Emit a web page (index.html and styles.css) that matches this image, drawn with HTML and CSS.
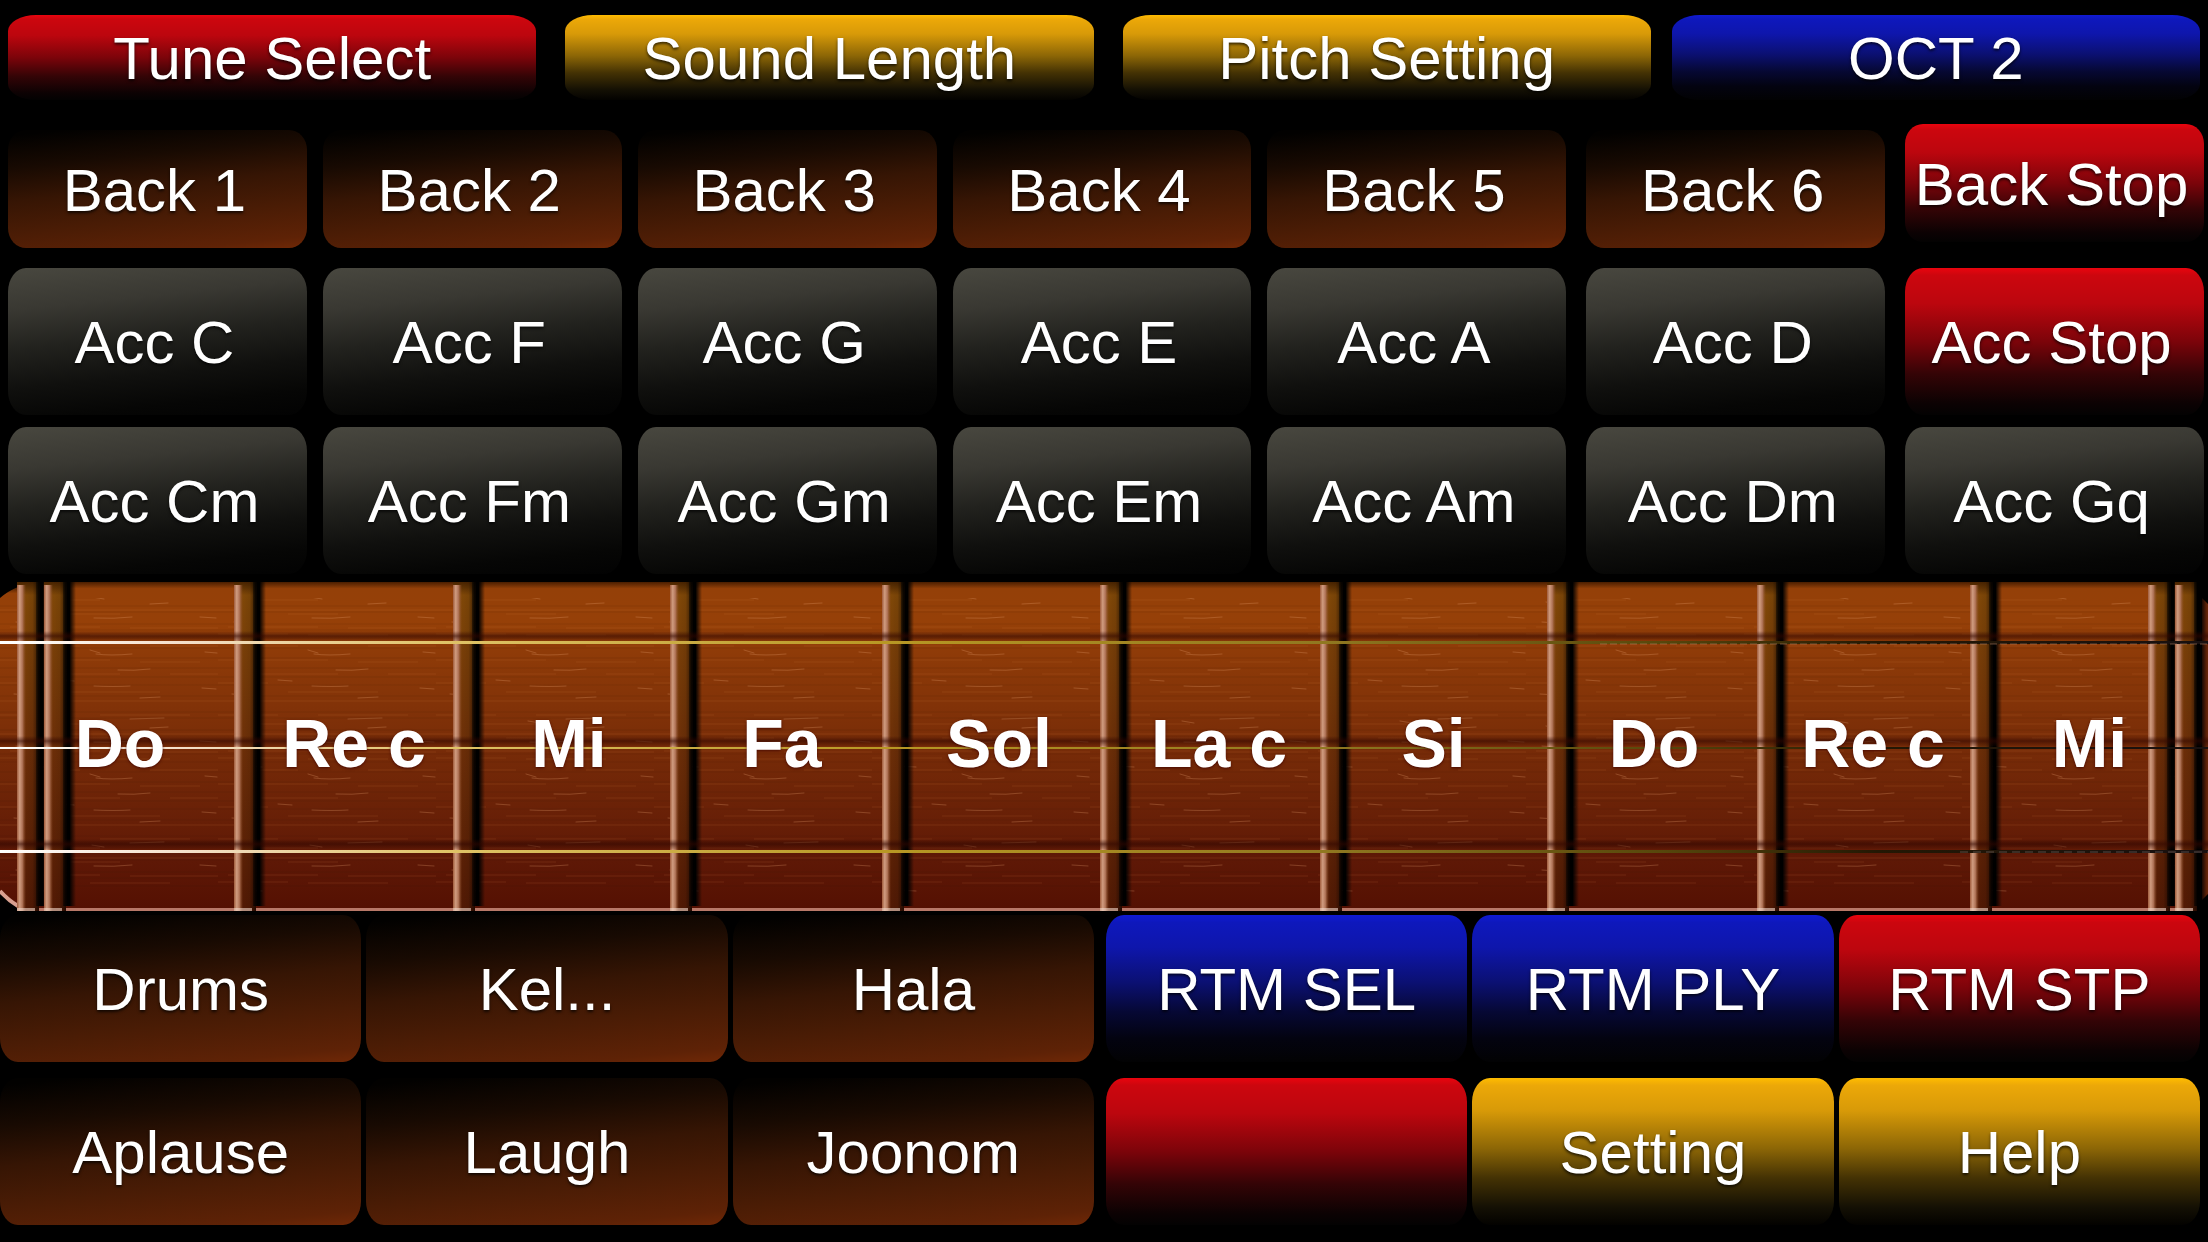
FILE: index.html
```html
<!DOCTYPE html>
<html lang="en">
<head>
    <meta charset="UTF-8">
    <meta name="viewport" content="width=device-width, initial-scale=1.0">
    <title>Strings</title>
    <link rel="stylesheet" href="styles.css">
</head>
<body>
    <main class="app">
        <!-- Top bar -->
        <div class="row row-top">
            <button class="key red">Tune Select</button>
            <button class="key gold">Sound Length</button>
            <button class="key gold">Pitch Setting</button>
            <button class="key blue">OCT 2</button>
        </div>

        <!-- Backing tracks -->
        <div class="row row-pads row-back">
            <button class="key brown">Back 1</button>
            <button class="key brown">Back 2</button>
            <button class="key brown">Back 3</button>
            <button class="key brown">Back 4</button>
            <button class="key brown">Back 5</button>
            <button class="key brown">Back 6</button>
            <button class="key red stop">Back Stop</button>
        </div>

        <!-- Accompaniment chords -->
        <div class="row row-pads row-major">
            <button class="key gray">Acc C</button>
            <button class="key gray">Acc F</button>
            <button class="key gray">Acc G</button>
            <button class="key gray">Acc E</button>
            <button class="key gray">Acc A</button>
            <button class="key gray">Acc D</button>
            <button class="key red">Acc Stop</button>
        </div>
        <div class="row row-pads row-minor">
            <button class="key gray">Acc Cm</button>
            <button class="key gray">Acc Fm</button>
            <button class="key gray">Acc Gm</button>
            <button class="key gray">Acc Em</button>
            <button class="key gray">Acc Am</button>
            <button class="key gray">Acc Dm</button>
            <button class="key gray">Acc Gq</button>
        </div>

        <!-- Fretboard -->
        <div class="fretboard">
            <svg class="board" viewBox="0 0 2208 329" preserveAspectRatio="none" aria-hidden="true">
                <defs>
                    <linearGradient id="wood" x1="0" y1="0" x2="0" y2="1">
                        <stop offset="0" stop-color="#4a1e00"/>
                        <stop offset=".02" stop-color="#944008"/>
                        <stop offset=".12" stop-color="#964008"/>
                        <stop offset=".5" stop-color="#782c08"/>
                        <stop offset=".85" stop-color="#5e1806"/>
                        <stop offset="1" stop-color="#541002"/>
                    </linearGradient>
                    <linearGradient id="bar" x1="0" y1="0" x2="0" y2="1">
                        <stop offset="0" stop-color="#4a2400"/>
                        <stop offset=".04" stop-color="#844a08"/>
                        <stop offset=".5" stop-color="#703008"/>
                        <stop offset="1" stop-color="#541a04"/>
                    </linearGradient>
                    <linearGradient id="barShade">
                        <stop offset="0" stop-color="#000" stop-opacity="0"/>
                        <stop offset=".6" stop-color="#000" stop-opacity=".1"/>
                        <stop offset="1" stop-color="#000" stop-opacity=".6"/>
                    </linearGradient>
                    <linearGradient id="shine">
                        <stop offset="0" stop-color="#a05c3c"/>
                        <stop offset=".3" stop-color="#d09c80"/>
                        <stop offset=".6" stop-color="#b07458"/>
                        <stop offset="1" stop-color="#8a4c28" stop-opacity="0"/>
                    </linearGradient>
                    <linearGradient id="slot">
                        <stop offset="0" stop-color="#000" stop-opacity=".4"/>
                        <stop offset=".3" stop-color="#000"/>
                        <stop offset=".5" stop-color="#000"/>
                        <stop offset="1" stop-color="#000" stop-opacity="0"/>
                    </linearGradient>
                    <linearGradient id="wire">
                        <stop offset="0" stop-color="#fff"/>
                        <stop offset=".08" stop-color="#f4e0cc"/>
                        <stop offset=".2" stop-color="#e0c468"/>
                        <stop offset=".4" stop-color="#b89824"/>
                        <stop offset=".6" stop-color="#907820"/>
                        <stop offset=".75" stop-color="#58480c"/>
                        <stop offset=".85" stop-color="#241804"/>
                        <stop offset="1" stop-color="#181010"/>
                    </linearGradient>
                    <linearGradient id="wireShade" x1="0" y1="0" x2="0" y2="1">
                        <stop offset="0" stop-color="#300600" stop-opacity="0"/>
                        <stop offset=".5" stop-color="#300600" stop-opacity=".6"/>
                        <stop offset="1" stop-color="#300600" stop-opacity=".1"/>
                    </linearGradient>
                    <pattern id="grain" width="218" height="124" patternUnits="userSpaceOnUse">
                        <g fill="none" stroke="#e8a070" stroke-linecap="round" stroke-opacity=".28">
                            <path d="M92 15l12 2M130 13l34-1M20 20l10 2M150 22l18-1M94 36q20 1 38 -1M200 35l16 1M16 40l14 1"/>
                            <path d="M90 68l10 3M96 72q14 2 36 0M205 70l12 1M24 60l20 1M118 88q16 1 32-1M22 84l10 1"/>
                            <path d="M94 104q20 1 36 0M202 106l14 1M140 116l20-1M14 112l16 1M60 98l14 1"/>
                        </g>
                        <g fill="none" stroke="#d07838" stroke-opacity=".16">
                            <path d="M0 9h60M100 9h90M30 18h70M0 28h218M70 32h50M10 45h90M130 46h88M0 52h70M90 53h80"/>
                            <path d="M20 64h60M150 64h68M0 78h110M140 80h60M40 92h80M170 92h48M0 101h50M70 110h90M0 119h218"/>
                        </g>
                        <g fill="none" stroke="#2c0800" stroke-opacity=".12">
                            <path d="M0 6h218M0 12h218M0 24h218M0 30h218M0 42h218M0 48h218M0 56h218M0 66h218M0 76h218M0 86h218M0 95h218M0 103h218M0 114h218"/>
                        </g>
                    </pattern>
                    <!-- one fret: highlight, bar and the dark slot behind it -->
                    <g id="fret">
                        <rect width="22" height="329" fill="url(#bar)"/>
                        <rect x="6" width="16" height="329" fill="url(#barShade)"/>
                        <rect width="9" y="3" height="326" fill="url(#shine)"/>
                        <rect x="19" width="13" height="324" fill="url(#slot)"/>
                        <rect y="326" width="18" height="3" fill="#f4d8cc" fill-opacity=".6"/>
                    </g>
                </defs>

                <!-- rounded ends -->
                <path d="M0 16Q8 9 18 5V324Q8 318 0 309Z" fill="url(#wood)"/>
                <path d="M0 309Q8 318 18 324" fill="none" stroke="#d8a090" stroke-width="4"/>
                <path d="M2202 16L2208 22V312L2202 318Z" fill="#642408"/>

                <rect x="17" width="2178" height="329" fill="url(#wood)"/>
                <rect y="16" width="2195" height="294" fill="url(#grain)"/>
                <rect x="17" y="326" width="2178" height="3" fill="#b87868"/>

                <use href="#fret" x="17"/>
                <use href="#fret" x="44"/>
                <use href="#fret" x="234"/>
                <use href="#fret" x="453"/>
                <use href="#fret" x="670"/>
                <use href="#fret" x="882"/>
                <use href="#fret" x="1100"/>
                <use href="#fret" x="1320"/>
                <use href="#fret" x="1547"/>
                <use href="#fret" x="1757"/>
                <use href="#fret" x="1970"/>
                <use href="#fret" x="2148"/>
                <use href="#fret" x="2175"/>

                <!-- strings -->
                <rect y="49" width="2208" height="10" fill="url(#wireShade)"/>
                <rect y="59" width="2208" height="3" fill="url(#wire)"/>
                <path d="M1600 62H2208" stroke="#c08c70" stroke-opacity=".5" stroke-dasharray="7 3"/>
                <rect y="154" width="2208" height="10" fill="url(#wireShade)"/>
                <rect y="165" width="2208" height="2" fill="url(#wire)"/>
                <rect y="257" width="2208" height="10" fill="url(#wireShade)"/>
                <rect y="268" width="2208" height="3" fill="url(#wire)"/>
                <path d="M1960 270H2208" stroke="#80706c" stroke-opacity=".6" stroke-dasharray="8 5"/>
            </svg>
            <div class="notes">
                <button class="note">Do</button>
                <button class="note">Re c</button>
                <button class="note">Mi</button>
                <button class="note">Fa</button>
                <button class="note">Sol</button>
                <button class="note">La c</button>
                <button class="note">Si</button>
                <button class="note">Do</button>
                <button class="note">Re c</button>
                <button class="note">Mi</button>
            </div>
        </div>

        <!-- Effects and rhythm -->
        <div class="bottom">
            <div class="panel">
                <button class="key brown">Drums</button>
                <button class="key brown">Kel...</button>
                <button class="key brown">Hala</button>
                <button class="key brown">Aplause</button>
                <button class="key brown">Laugh</button>
                <button class="key brown">Joonom</button>
            </div>
            <div class="panel">
                <button class="key blue">RTM SEL</button>
                <button class="key blue">RTM PLY</button>
                <button class="key red">RTM STP</button>
                <button class="key red"></button>
                <button class="key gold">Setting</button>
                <button class="key gold">Help</button>
            </div>
        </div>
    </main>
</body>
</html>
```

FILE: styles.css
```css
:root {
    --red: linear-gradient(#ea040e 0, #cc060e 5%, #bc060e 24%, #7c040a 50%, #340406 72%, #0c0203 92%, #030202 100%);
    --gold: linear-gradient(#ffbc00 0, #eca808 5%, #d89a08 22%, #8c6606 48%, #443204 68%, #141004 88%, #030200 100%);
    --blue: linear-gradient(#101ad4 0, #0e18bc 5%, #0e16ac 22%, #0b1072 46%, #060834 66%, #030310 84%, #020203 100%);
    --brown: linear-gradient(174deg, #020100 4%, #180a02 26%, #361504 48%, #4a1c05 70%, #5e2206 92%, #702806 100%);
    --gray: linear-gradient(174deg, #47463e 2%, #393832 24%, #22221e 46%, #10100e 68%, #060605 86%, #020202 100%);
}

* {
    margin: 0;
    padding: 0;
    box-sizing: border-box;
}

body {
    background-color: #000;
    color: #fff;
    font-family: "Liberation Sans", Arial, Helvetica, sans-serif;
    min-height: 100vh;
    overflow-x: hidden;
}

.app {
    padding-top: 15px;
}

button {
    border: none;
    background: none;
    color: inherit;
    font-family: inherit;
    white-space: nowrap;
    cursor: pointer;
}

/* Keys */
.key {
    flex: 1 1 0;
    min-width: 0;
    height: 147px;
    padding-top: 2px;
    border-radius: 18px / 24px;
    font-size: 60px;
    line-height: 68px;
    text-shadow: 0 2px 3px rgba(0, 0, 0, 0.7);
}

.key:active {
    filter: brightness(1.3);
}

.red { background: var(--red); }
.gold { background: var(--gold); }
.blue { background: var(--blue); }
.brown { background: var(--brown); }
.gray { background: var(--gray); }

.row {
    display: flex;
}

.row-top {
    gap: 21px;
    padding: 0 8px;
    margin-bottom: 24px;
}

.row-top .key {
    height: 85px;
    border-radius: 28px / 16px;
}

.row-top .gold {
    margin-left: 8px;
}

.row-pads {
    gap: 16px;
    padding: 0 4px 0 8px;
}

.row-pads .key {
    padding-right: 6px;
}

.row-pads .key:nth-child(n+6) {
    margin-left: 4px;
}

.row-back {
    align-items: flex-end;
    height: 124px;
    margin-bottom: 20px;
}

.row-back .key {
    height: 118px;
    padding-top: 4px;
    border-radius: 18px / 20px;
}

.row-back .stop {
    align-self: flex-start;
}

.row-major {
    margin-bottom: 12px;
}

.row-minor {
    margin-bottom: 8px;
}

/* Fretboard */
.fretboard {
    display: grid;
    height: 329px;
    margin-bottom: 4px;
}

.board,
.notes {
    grid-area: 1 / 1;
    width: 100%;
    height: 329px;
}

.notes {
    z-index: 1;
    display: grid;
    grid-template-columns: 240fr 228fr 202fr 224fr 210fr 230fr 199fr 242fr 196fr 237fr;
}

.note {
    min-width: 0;
    padding-bottom: 8px;
    font-size: 68px;
    font-weight: bold;
    text-shadow: 0 1px 3px rgba(60, 0, 0, 0.8);
}

/* Bottom panels */
.bottom {
    display: flex;
    gap: 12px;
    padding-right: 8px;
}

.panel {
    flex: 1 1 0;
    display: grid;
    grid-template-columns: repeat(3, 1fr);
    gap: 16px 5px;
}
```
